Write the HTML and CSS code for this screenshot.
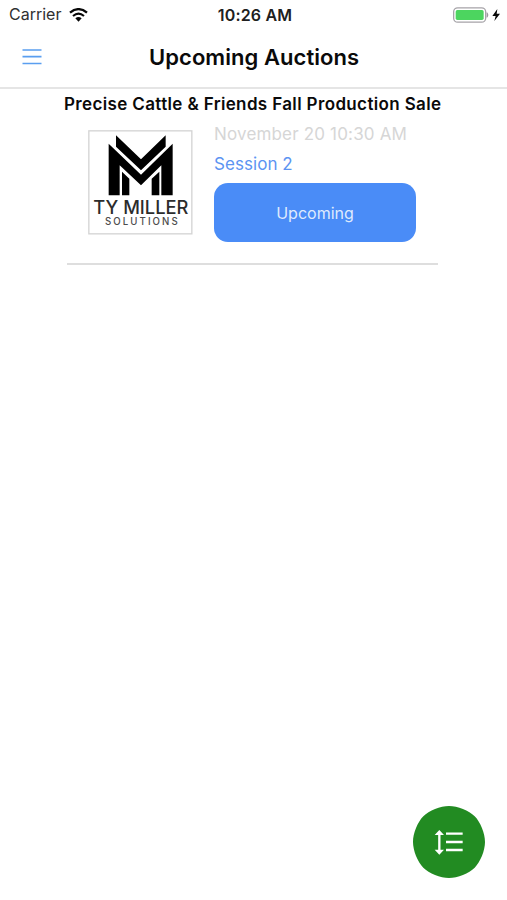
FILE: index.html
```html
<!DOCTYPE html>
<html lang="en">
<head>
<meta charset="utf-8">
<title>Upcoming Auctions</title>
<link rel="stylesheet" href="styles.css">
</head>
<body>
<div class="status">
  <div class="status-left">
    <span class="carrier">Carrier</span>
    <svg class="wifi" viewBox="0 0 57 42">
      <path d="M3 14Q28.500 -7 54 14" fill="none" stroke="#080808" stroke-width="7"/>
      <path d="M12 24Q28.500 10 45 24" fill="none" stroke="#080808" stroke-width="6.500"/>
      <path d="M19 31Q28.500 23 38 31L28.500 41Z" fill="#080808"/>
    </svg>
  </div>
  <span class="time">10:26 AM</span>
  <svg class="battery" viewBox="0 0 144 48">
    <rect x="2" y="2.500" width="96" height="43" rx="12" fill="#fff" stroke="#a6a3a8" stroke-width="4"/>
    <rect x="8" y="9" width="84" height="30" rx="5" fill="#4cd55f"/>
    <path d="M102 17Q108 24 102 31Z" fill="#99959c" stroke="#99959c" stroke-width="2"/>
    <path d="M133 6L118 27H128L124 42L141 20H131Z" fill="#080808"/>
  </svg>
</div>
<header class="nav">
  <svg class="menu" viewBox="0 0 20 18"><path d="M.5 2H19.500M.5 8.700H19.500M.5 15.500H19.500" stroke="#5a9ef0" stroke-width="1.700"/></svg>
  <h1>Upcoming Auctions</h1>
</header>
<main>
  <article class="auction">
    <h2>Precise Cattle &amp; Friends Fall Production Sale</h2>
    <div class="row">
      <svg class="logo" viewBox="24 24 315 315">
        <rect x="26.500" y="26.500" width="309" height="309" fill="#fff" stroke="#d4d4d4" stroke-width="4"/>
        <path d="M108 40L183 112L257 40V74L183 145L108 74Z"/>
        <path d="M86 65L183 158L278 65V220H244V130L183 190L119 130V220H86Z"/>
        <path d="M126 149L148 170V220H126ZM238 149V220H215V170Z"/>
        <text class="brand" x="40" y="275" textLength="285" lengthAdjust="spacingAndGlyphs">TY MILLER</text>
        <text class="sub" x="75" y="309" textLength="218">SOLUTIONS</text>
      </svg>
      <div class="info">
        <div class="date">November 20 10:30 AM</div>
        <div class="session">Session 2</div>
        <button class="state">Upcoming</button>
      </div>
    </div>
  </article>
</main>
<button class="fab" aria-label="Sort">
  <svg viewBox="0 0 216 216">
    <path d="M108 0C134 0 168 14 185 31C202 48 216 82 216 108C216 134 202 168 185 185C168 202 134 216 108 216C82 216 48 202 31 185C14 168 0 134 0 108C0 82 14 48 31 31C48 14 82 0 108 0Z" fill="#228b22"/>
    <path d="M79 80V138M99 83H149M99 108H149M99 132H149" stroke="#fff" stroke-width="7"/>
    <path d="M79 72L93 87H65ZM79 146L93 131H65Z" fill="#fff"/>
  </svg>
</button>
</body>
</html>
```
FILE: styles.css
```css
* { box-sizing: border-box; }
body {
  margin: 0;
  height: 900px;
  background: #fff;
  font-family: Inter, "Liberation Sans", sans-serif;
  color: #0a0a0a;
  overflow: hidden;
}
h1, h2 { margin: 0; font-weight: 600; white-space: nowrap; }
.status {
  height: 29px;
  display: grid;
  grid-template-columns: 1fr auto 1fr;
  align-items: center;
  padding: 0 6px 0 9px;
}
.status-left { display: flex; align-items: center; gap: 8px; }
.carrier { font-size: 16px; line-height: 29px; color: #303030; }
.wifi { width: 19px; height: 14px; }
.time { font-size: 16px; font-weight: 600; letter-spacing: .2px; color: #202020; }
.battery { width: 48px; height: 16px; justify-self: end; }
.nav {
  height: 60px;
  display: grid;
  grid-template-columns: 127px 1fr;
  align-items: center;
  padding-left: 22px;
  padding-bottom: 2px;
  border-bottom: 2px solid #e5e5e5;
}
.menu { width: 20px; height: 18px; }
h1 { font-size: 22px; line-height: 28px; letter-spacing: .06px; }
main { display: flex; padding-left: 67px; }
.auction {
  width: 371px;
  height: 176px;
  border-bottom: 2px solid #dedede;
}
h2 {
  margin-left: -3px;
  padding-top: 4px;
  font-size: 17px;
  line-height: 22px;
  letter-spacing: .36px;
}
.row { display: flex; gap: 21px; padding: 8px 0 0 21px; }
.logo { width: 105px; height: 105px; margin-top: 7px; }
.brand { font: 500 55px Inter, sans-serif; fill: #2c2c2c; }
.sub { font: 500 29px Inter, sans-serif; fill: #4c4c4c; }
.info { display: flex; flex-direction: column; width: 202px; }
.date { font-size: 17px; line-height: 22px; letter-spacing: .17px; color: #d6d6d6; white-space: nowrap; }
.session { margin-top: 8px; font-size: 17px; line-height: 22px; letter-spacing: .05px; color: #5c94f2; }
.state {
  margin-top: 8px;
  height: 59px;
  border: 0;
  border-radius: 14px;
  background: #4a8cf7;
  color: #dfeafd;
  font: 400 16px Inter, sans-serif;
}
.fab {
  position: absolute;
  left: 413px;
  top: 806px;
  width: 72px;
  height: 72px;
  padding: 0;
  border: 0;
  background: none;
}
.fab svg { display: block; width: 72px; height: 72px; }
```
